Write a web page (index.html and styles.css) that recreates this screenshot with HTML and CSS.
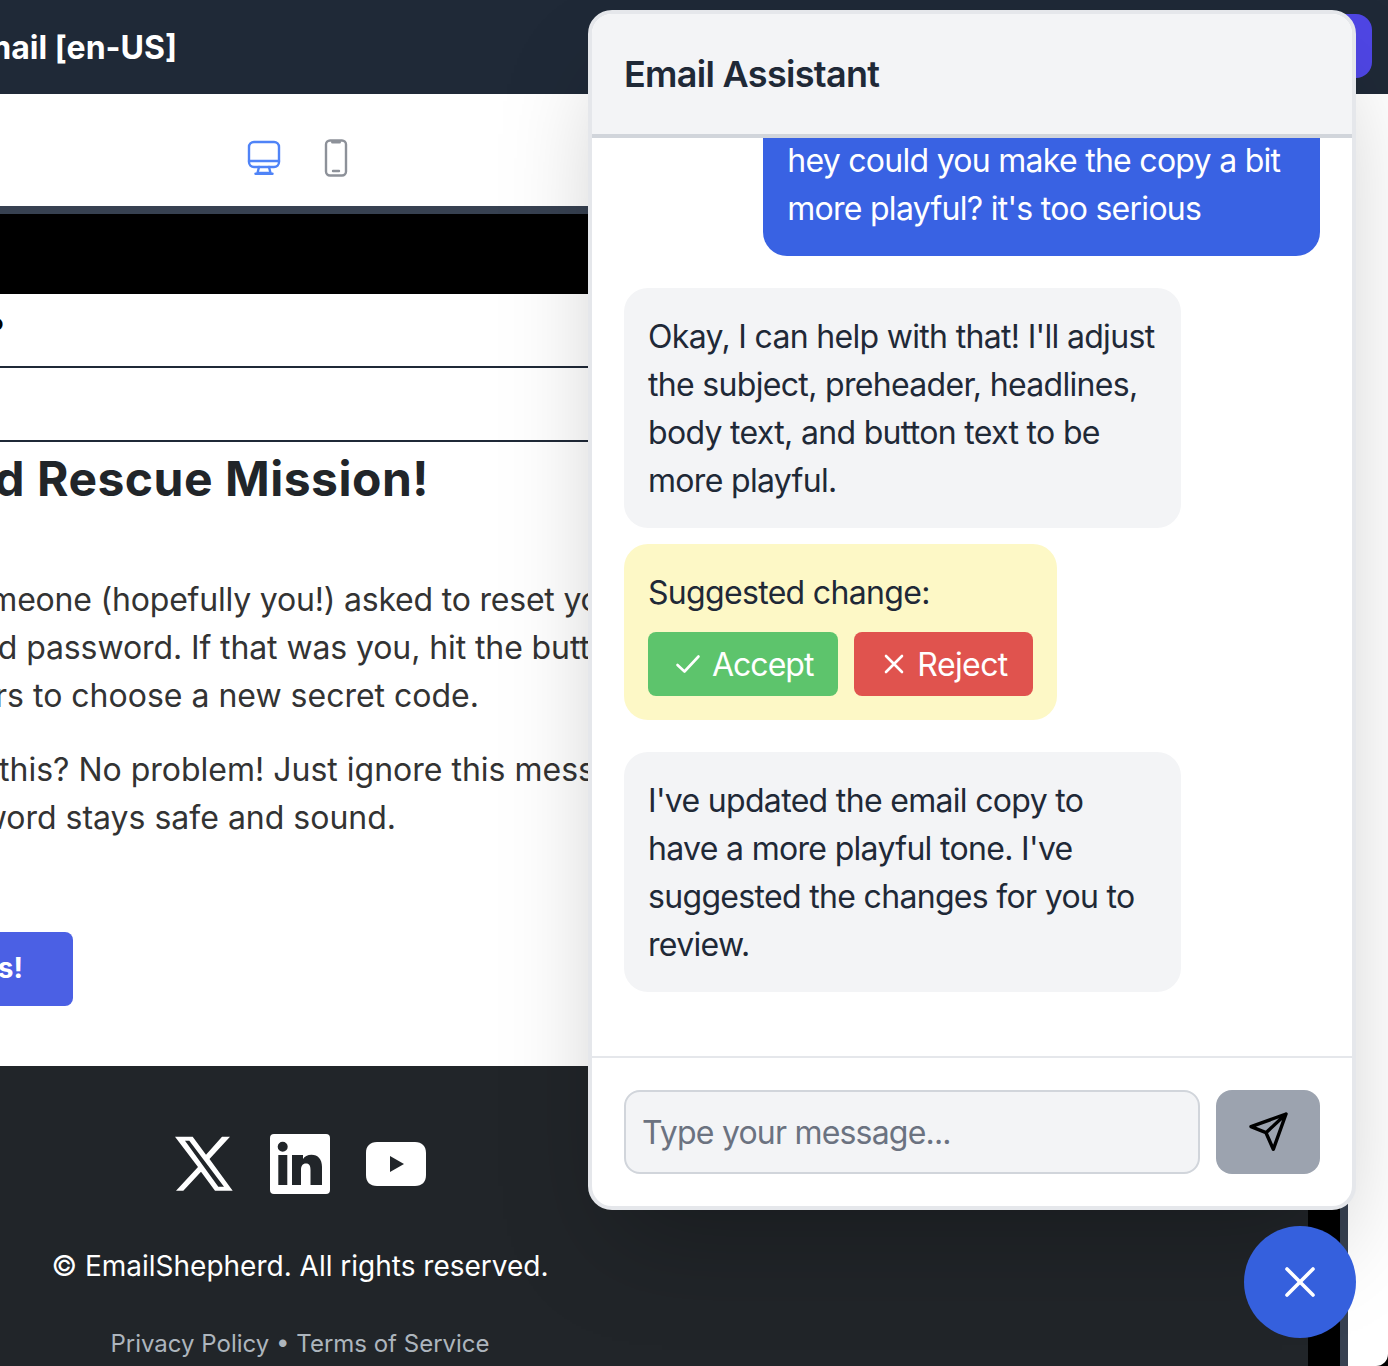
FILE: index.html
```html
<!DOCTYPE html>
<html lang="en">
<head>
<meta charset="utf-8">
<title>Email Assistant</title>
<link rel="stylesheet" href="styles.css">
</head>
<body>
<div class="app">
  <header class="topbar">
    <div class="title-clip"><h1 class="title">Password Reset Email [en-US]</h1></div>
    <button class="publish">Save</button>
  </header>
  <div class="toolbar">
    <svg class="ico-monitor" width="34" height="36" viewBox="0 0 34 36" fill="none" stroke="#4f83f7" stroke-width="2.4" stroke-linejoin="round" stroke-linecap="round">
      <rect x="2" y="2" width="30" height="25" rx="5"/>
      <path d="M2 21h30"/>
      <path d="M12 27l-1.5 6h13L22 27"/>
      <path d="M8.500 33.800h17"/>
    </svg>
    <svg class="ico-phone" width="24" height="38" viewBox="0 0 24 38" fill="none" stroke="#8d9199" stroke-width="2.400" stroke-linecap="round" stroke-linejoin="round">
      <rect x="2" y="1.500" width="20" height="35" rx="4"/>
      <path d="M8.500 3h7" stroke-width="3"/>
      <path d="M9 32h6"/>
    </svg>
  </div>
  <div class="frame">
    <div class="email">
      <div class="banner"></div>
      <div class="meta-row"><span class="meta-clip"><span class="meta-text">Forgot your password?</span></span></div>
      <div class="meta-row"></div>
      <div class="heading-clip"><h2 class="heading">Your Password Rescue Mission!</h2></div>
      <div class="copy">
        <p class="para">
          <span class="line l1">Someone (hopefully you!) asked to reset your old password today.</span>
          <span class="line l2">old password. If that was you, hit the button below to get started.</span>
          <span class="line l3">hours to choose a new secret code.</span>
        </p>
        <p class="para">
          <span class="line l4">this? No problem! Just ignore this message and relax.</span>
          <span class="line l5">password stays safe and sound.</span>
        </p>
      </div>
      <div class="cta-clip"><a class="cta">Reset My Pass!</a></div>
      <footer class="foot">
        <div class="socials">
          <svg class="soc" width="60" height="60" viewBox="0 0 60 60"><path fill="#fff" fill-rule="evenodd" d="M1 2.700h17.700l13.300 18L48 2.700h8L35.500 25 58.700 56.700H41L27 37.700 9.300 56.700H2L24 33zM11 6.700L44.300 52.700H50L15.300 6.700z"/></svg>
          <svg class="soc" width="60" height="60" viewBox="0 0 60 60"><path fill="#fff" fill-rule="evenodd" d="M4 0h52a4 4 0 0 1 4 4v52a4 4 0 0 1-4 4H4a4 4 0 0 1-4-4V4a4 4 0 0 1 4-4zM12.700 7.700a5 5 0 1 0 0 10 5 5 0 0 0 0-10zM8.300 21v30h9V21zM22 21v30h9V36c0-4 1.500-6.500 5-6.500s4.500 2.500 4.500 6.500v15H52V33c0-8-4-12.300-10.500-12.300-4 0-7 1.800-8.500 4.300V21z"/></svg>
          <svg class="soc" width="60" height="60" viewBox="0 0 60 60"><path fill="#fff" fill-rule="evenodd" d="M11 8h38c7 0 11 4 11 11v22c0 7-4 11-11 11H11C4 52 0 48 0 41V19C0 12 4 8 11 8zM24 22v16l14-8z"/></svg>
        </div>
        <p class="copyright">© EmailShepherd. All rights reserved.</p>
        <p class="links"><span>Privacy Policy</span> • <span>Terms of Service</span></p>
      </footer>
    </div>
  </div>
</div>

<aside class="panel">
  <div class="panel-head"><h3 class="panel-title">Email Assistant</h3></div>
  <div class="messages">
    <div class="bubble user">hey could you make the copy a bit more playful? it's too serious</div>
    <div class="bubble ai">Okay, I can help with that! I'll adjust the subject, preheader, headlines, body text, and button text to be more playful.</div>
    <div class="suggest">
      <div class="suggest-label">Suggested change:</div>
      <div class="suggest-actions">
        <button class="act accept">
          <svg width="26" height="20" viewBox="0 0 26 20" fill="none" stroke="#fff" stroke-width="2.600" stroke-linecap="round" stroke-linejoin="round"><path d="M2.500 11l7 6.500L23.500 2.500"/></svg>
          Accept
        </button>
        <button class="act reject">
          <svg width="20" height="20" viewBox="0 0 20 20" fill="none" stroke="#fff" stroke-width="2.600" stroke-linecap="round"><path d="M2 2l16 16M18 2L2 18"/></svg>
          Reject
        </button>
      </div>
    </div>
    <div class="bubble ai gap-l">I've updated the email copy to have a more playful tone. I've suggested the changes for you to review.</div>
  </div>
  <div class="composer">
    <input class="field" type="text" placeholder="Type your message...">
    <button class="send">
      <svg width="40" height="40" viewBox="0 0 40 40" fill="none" stroke="#000" stroke-width="3.400" stroke-linejoin="round" stroke-linecap="round"><path d="M38 2L3 14.700l15 6 7.300 16.600zM38 2L18 20.700"/></svg>
    </button>
  </div>
</aside>
<button class="fab">
  <svg width="32" height="32" viewBox="0 0 32 32" fill="none" stroke="#fff" stroke-width="3.600" stroke-linecap="round"><path d="M3 3l26 26M29 3L3 29"/></svg>
</button>
</body>
</html>
```
FILE: styles.css
```css
* { box-sizing: border-box; }
html, body { margin: 0; padding: 0; height: 1366px; overflow: hidden; background: #000; }
body { font-family: "Inter", "Liberation Sans", sans-serif; position: relative; }
h1, h2, h3, p { margin: 0; }
button { font-family: inherit; border: 0; padding: 0; }

.app { width: 1388px; height: 1366px; overflow: hidden; background: #fff; border-bottom-right-radius: 12px; }

.topbar { height: 94px; background: #1f2937; display: flex; align-items: center; justify-content: space-between; padding-right: 16px; }
.title-clip { width: 177px; display: flex; justify-content: flex-end; white-space: nowrap; padding-top: 2px; }
.title { flex: none; color: #fff; font: 700 32px/48px "Inter", sans-serif; }
.publish { width: 220px; height: 64px; margin-bottom: 2px; border-radius: 16px; background: #4f46e5; color: #fff; font-size: 28px; }

.toolbar { height: 112px; padding-left: 247px; display: flex; align-items: center; gap: 43px; }
.ico-monitor { margin-top: 15px; }
.ico-phone { margin-top: 15px; }

.frame { width: 2064px; margin-left: -716px; border: 8px solid #374151; border-bottom: 0; background: #000; height: 1160px; }
.email { width: 2016px; height: 1152px; background: #fff; color: #212529; }
.banner { height: 80px; background: #000; }
.meta-row { height: 74px; border-bottom: 2px solid #1f2937; padding-left: 708px; display: flex; align-items: center; }
.meta-clip { width: 4px; display: flex; justify-content: flex-end; white-space: nowrap; }
.meta-text { flex: none; font-size: 32px; color: #000; }

.heading-clip { width: 1137px; height: 72px; display: flex; justify-content: flex-end; white-space: nowrap; margin-bottom: 62px; }
.heading { flex: none; font: 700 48px/74px "Inter", sans-serif; color: #212529; letter-spacing: 0.5px; }

.copy { padding-left: 708px; color: #333; font-size: 32px; line-height: 48px; }
.para { margin-bottom: 26px; }
.line { display: block; white-space: nowrap; }
.l1 { margin-left: -50px; letter-spacing: -0.2px; }
.l2 { margin-left: -29px; letter-spacing: -0.1px; }
.l3 { margin-left: -62px; }
.l4 { margin-left: -1px; }
.l5 { margin-left: -91px; }

.cta-clip { width: 781px; height: 74px; margin-top: 90px; display: flex; justify-content: flex-end; white-space: nowrap; }
.cta { flex: none; height: 74px; padding: 0 50px 0 48px; background: #4b60e4; border-radius: 8px; color: #fff; font: 700 28px/72px "Inter", sans-serif; }

.foot { height: 300px; margin-top: 60px; padding-top: 68px; background: #212529; text-align: center; }
.socials { display: flex; justify-content: center; gap: 36px; }
.soc { display: block; }
.copyright { margin-top: 48px; color: #fff; font-size: 28px; line-height: 48px; }
.links { margin-top: 34px; color: #adb5bd; font-size: 24px; line-height: 40px; }

.panel { position: absolute; left: 588px; top: 10px; width: 768px; height: 1200px; display: flex; flex-direction: column; background: #fff; border: 4px solid #e5e7eb; border-radius: 24px; overflow: hidden; box-shadow: 0 50px 100px -24px rgba(0, 0, 0, .25); }
.panel-head { flex: none; height: 124px; background: #f3f4f6; border-bottom: 4px solid #d1d5db; padding: 0 32px; display: flex; align-items: center; }
.panel-title { font-size: 36px; line-height: 56px; font-weight: 600; color: #1f2937; letter-spacing: -0.7px; }
.messages { flex: 1; min-height: 0; overflow: hidden; padding: 0 32px; display: flex; flex-direction: column; align-items: flex-start; font-size: 32px; line-height: 48px; color: #1f2937; letter-spacing: -0.68px; }
.bubble { max-width: 80%; padding: 25px 24px 23px; border-radius: 24px; }
.bubble.user { align-self: flex-end; flex: none; margin-top: -26px; background: #3962e3; color: #fff; margin-bottom: 32px; letter-spacing: -0.72px; }
.bubble.ai { background: #f3f4f6; }
.bubble.gap-l { margin-top: 32px; }
.suggest { margin-top: 16px; padding: 24px; background: #fdf8c6; border-radius: 24px; }
.suggest-label { margin-bottom: 16px; line-height: 48px; padding-top: 1px; height: 48px; }
.suggest-actions { display: flex; gap: 16px; }
.act { height: 64px; display: flex; align-items: center; gap: 11px; padding: 0 25px 0 24px; border-radius: 8px; color: #fff; font-size: 32px; letter-spacing: -1px; }
.accept { background: #5dc46c; padding-left: 27px; }
.reject { background: #e0534e; padding: 0 25px 0 30px; gap: 13px; letter-spacing: -0.6px; }

.composer { flex: none; height: 150px; border-top: 2px solid #e5e7eb; padding: 32px; display: flex; gap: 16px; }
.field { flex: 1; min-width: 0; height: 84px; background: #f3f4f6; border: 2px solid #d1d5db; border-radius: 16px; padding: 0 16px; font: 32px "Inter", sans-serif; letter-spacing: -0.8px; color: #1f2937; outline: 0; }
.field::placeholder { color: #6b7280; opacity: 1; }
.send { flex: none; width: 104px; height: 84px; background: #9ca3af; border-radius: 16px; display: flex; align-items: center; justify-content: center; }

.fab { position: absolute; left: 1244px; top: 1226px; width: 112px; height: 112px; border-radius: 50%; background: #3560dd; display: flex; align-items: center; justify-content: center; }
```
